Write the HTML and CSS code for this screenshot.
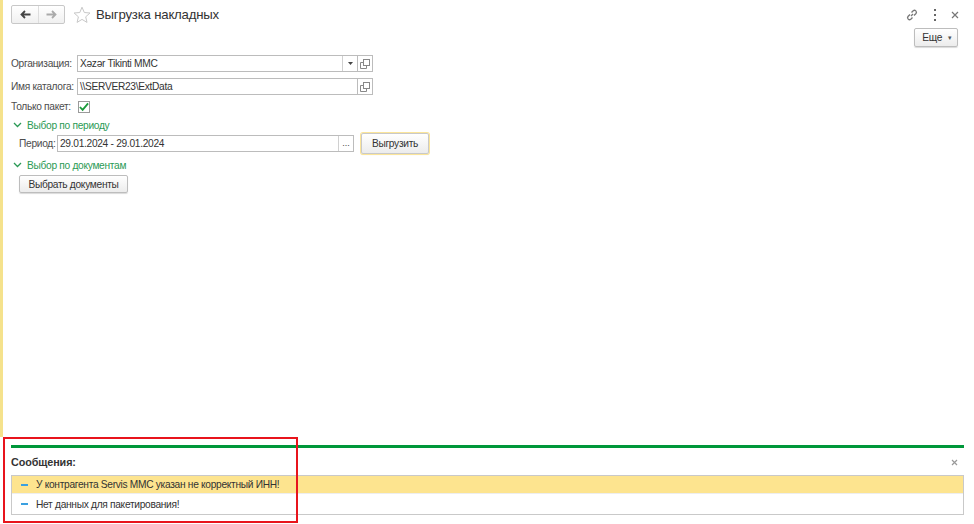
FILE: index.html
```html
<!DOCTYPE html>
<html lang="ru">
<head>
    <meta charset="UTF-8">
    <title>Выгрузка накладных</title>
    <link rel="stylesheet" href="styles.css">
</head>
<body>
    <div class="window">
        <div class="main">
            <!-- Шапка формы -->
            <div class="header">
                <div class="nav">
                    <span class="nav-btn">
                        <svg width="11" height="9" viewBox="0 0 11 9"><path d="M1.5 4.5h9M5 1L1.5 4.5 5 8" stroke="#444" stroke-width="1.8" fill="none"/></svg>
                    </span>
                    <span class="nav-btn">
                        <svg width="11" height="9" viewBox="0 0 11 9"><path d="M0.5 4.5h9M6 1l3.5 3.5L6 8" stroke="#aaa" stroke-width="1.8" fill="none"/></svg>
                    </span>
                </div>
                <svg class="star" width="18" height="18" viewBox="0 0 18 18"><path d="M9 1.2l2.3 5.3 5.7.5-4.3 3.8 1.3 5.6L9 13.4l-4.9 3 1.3-5.6L1.1 7l5.7-.5z" fill="none" stroke="#c8c8c8" stroke-width="1"/></svg>
                <span class="title">Выгрузка накладных</span>
                <div class="tools">
                    <svg width="14" height="14" viewBox="0 0 14 14"><g fill="none" stroke="#777" stroke-width="1.3"><path d="M6 8l2-2"/><path d="M5 6.5L3 8.5a2 2 0 0 0 2.8 2.8L7.5 9.5"/><path d="M9 7.5l2-2a2 2 0 0 0-2.8-2.8L6.5 4.5"/></g></svg>
                    <svg width="4" height="12" viewBox="0 0 4 12"><g fill="#666"><rect x="1" y="0" width="2" height="2"/><rect x="1" y="5" width="2" height="2"/><rect x="1" y="10" width="2" height="2"/></g></svg>
                    <svg width="8" height="8" viewBox="0 0 8 8"><path d="M1 1l6 6M7 1L1 7" stroke="#777" stroke-width="1.2"/></svg>
                </div>
            </div>

            <div class="toolbar">
                <span class="btn btn-more">Еще <span class="caret">▾</span></span>
            </div>

            <!-- Поля формы -->
            <div class="form">
                <div class="row">
                    <span class="label">Организация:</span>
                    <div class="field wide">
                        <span class="value">Xəzər Tikinti MMC</span>
                        <span class="fbtn">
                            <svg width="5" height="3" viewBox="0 0 5 3"><path d="M0 0h5L2.5 3z" fill="#444"/></svg>
                        </span>
                    </div>
                    <span class="fbtn open">
                        <svg width="10" height="10" viewBox="0 0 10 10"><g fill="none" stroke="#888"><rect x="3.5" y="0.5" width="6" height="6"/><path d="M3.5 3.5h-3v6h6v-3"/></g></svg>
                    </span>
                </div>
                <div class="row">
                    <span class="label">Имя каталога:</span>
                    <div class="field wide">
                        <span class="value">\\SERVER23\ExtData</span>
                    </div>
                    <span class="fbtn open">
                        <svg width="10" height="10" viewBox="0 0 10 10"><g fill="none" stroke="#888"><rect x="3.5" y="0.5" width="6" height="6"/><path d="M3.5 3.5h-3v6h6v-3"/></g></svg>
                    </span>
                </div>
                <div class="row row-check">
                    <span class="label">Только пакет:</span>
                    <span class="check">
                        <svg width="11" height="10" viewBox="0 0 11 10"><path d="M1 5l3 3.2L10 1" fill="none" stroke="#1a9a3a" stroke-width="2"/></svg>
                    </span>
                </div>

                <div class="group-title">
                    <svg width="9" height="6" viewBox="0 0 9 6"><path d="M1 1l3.5 3.5L8 1" fill="none" stroke="#2a9a55" stroke-width="1.3"/></svg>
                    Выбор по периоду
                </div>
                <div class="group row-period">
                    <span class="label short">Период:</span>
                    <div class="field period">
                        <span class="value">29.01.2024 - 29.01.2024</span>
                        <span class="fbtn dots">...</span>
                    </div>
                    <span class="btn btn-default">Выгрузить</span>
                </div>

                <div class="group-title">
                    <svg width="9" height="6" viewBox="0 0 9 6"><path d="M1 1l3.5 3.5L8 1" fill="none" stroke="#2a9a55" stroke-width="1.3"/></svg>
                    Выбор по документам
                </div>
                <div class="group">
                    <span class="btn btn-docs">Выбрать документы</span>
                </div>
            </div>
        </div>

        <!-- Сообщения -->
        <div class="messages">
            <div class="marker"></div>
            <div class="msg-line"></div>
            <div class="msg-head">
                <span>Сообщения:</span>
                <svg width="7" height="7" viewBox="0 0 7 7"><path d="M1 1l5 5M6 1L1 6" stroke="#999" stroke-width="1.2"/></svg>
            </div>
            <div class="msg-list">
                <div class="msg active"><span class="dash"></span>У контрагента Servis MMC указан не корректный ИНН!</div>
                <div class="msg"><span class="dash"></span>Нет данных для пакетирования!</div>
            </div>
        </div>
    </div>
</body>
</html>
```

FILE: styles.css
```css
* {
    box-sizing: border-box;
}

body {
    margin: 0;
    font-family: Arial, "Liberation Sans", sans-serif;
    font-size: 10.2px;
    letter-spacing: -0.3px;
    color: #333;
    background: #fff;
}

.window {
    width: 974px;
    height: 524px;
    display: flex;
    flex-direction: column;
    position: relative;
}

.main {
    flex: 1;
    border-left: 3px solid #f5e28c;
    padding: 0 8px;
}

.header {
    display: flex;
    align-items: center;
    height: 19px;
    margin-top: 5px;
}

.nav {
    display: flex;
    border: 1px solid #c8c8c8;
    border-radius: 2px;
    background: linear-gradient(#fff, #f0f0f0);
    height: 19px;
}

.nav-btn {
    width: 26px;
    display: flex;
    align-items: center;
    justify-content: center;
}

.nav-btn + .nav-btn {
    border-left: 1px solid #ddd;
}

.star {
    margin-left: 8px;
}

.title {
    margin-left: 5px;
    font-size: 13.2px;
    letter-spacing: -0.2px;
    color: #333;
}

.tools {
    margin-left: auto;
    display: flex;
    align-items: center;
    gap: 14px;
    margin-right: 7px;
}

.toolbar {
    display: flex;
    justify-content: flex-end;
    margin-top: 4px;
    padding-right: 8px;
}

.btn {
    display: inline-flex;
    align-items: center;
    justify-content: center;
    height: 19px;
    padding: 0 9px;
    border: 1px solid #bdbdbd;
    border-radius: 2px;
    background: linear-gradient(#fff, #ececec);
    box-shadow: 0 1px 1px rgba(0, 0, 0, 0.15);
    color: #333;
}

.btn-more {
    width: 44px;
    padding: 0 0 0 2px;
}

.caret {
    font-size: 7px;
    margin-left: 6px;
    color: #555;
}

.form {
    margin-top: 8px;
}

.row {
    display: flex;
    align-items: center;
    height: 17px;
    margin-bottom: 6px;
}

.label {
    width: 66px;
    color: #4d4d4d;
    white-space: nowrap;
}

.label.short {
    width: 38px;
}

.field {
    display: flex;
    align-items: center;
    height: 17px;
    border: 1px solid #bcbcbc;
    background: #fff;
}

.value {
    flex: 1;
    padding-left: 2px;
    color: #333;
    white-space: nowrap;
}

.wide {
    width: 281px;
}

.period {
    width: 297px;
}

.fbtn {
    width: 15px;
    height: 15px;
    display: flex;
    align-items: center;
    justify-content: center;
    border-left: 1px solid #d0d0d0;
}

.open {
    width: 15px;
    height: 17px;
    border: 1px solid #bcbcbc;
    border-left: none;
}

.dots {
    font-size: 9px;
    letter-spacing: 0;
    color: #444;
    align-items: flex-end;
    padding-bottom: 3px;
}

.row-check {
    height: 13px;
    margin-top: -1px;
    margin-bottom: 5px;
}

.check {
    width: 12px;
    height: 12px;
    border: 1px solid #9a9a9a;
    display: flex;
    align-items: center;
    justify-content: center;
    margin-left: 1px;
    background: #fff;
}

.group-title {
    display: flex;
    align-items: center;
    gap: 5px;
    height: 14px;
    color: #2a9a55;
    padding-left: 2px;
}

.group {
    padding-left: 8px;
}

.row-period {
    display: flex;
    align-items: center;
    height: 23px;
    margin-top: 0;
    margin-bottom: 3px;
}

.btn-default {
    margin-left: 7px;
    width: 68px;
    height: 21px;
    padding: 0;
    border-color: #c9c9c9;
    box-shadow: 0 0 0 1px #fbe59a, 0 1px 1px rgba(0, 0, 0, 0.15);
}

.btn-docs {
    margin-top: 3px;
    width: 109px;
    height: 18px;
    padding: 0;
}

.messages {
    height: 87px;
    position: relative;
    padding: 8px 10px 0 11px;
}

.marker {
    position: absolute;
    left: 3px;
    top: 0;
    width: 295px;
    height: 86px;
    border: 2px solid #e8141c;
}

.msg-line {
    height: 3px;
    background: #00973a;
}

.msg-head {
    display: flex;
    justify-content: space-between;
    align-items: center;
    height: 14px;
    margin-top: 7px;
    font-size: 10.8px;
    letter-spacing: -0.1px;
    font-weight: bold;
    color: #333;
    padding-right: 6px;
}

.msg-list {
    margin-top: 6px;
    border: 1px solid #c9c9c9;
}

.msg {
    display: flex;
    align-items: center;
    height: 20px;
    color: #333;
}

.msg.active {
    height: 18px;
    background: #fde48f;
    border-bottom: 1px solid #eee;
}

.dash {
    width: 7px;
    height: 2px;
    background: #3aa0e0;
    margin: 0 8px 0 9px;
}
```
